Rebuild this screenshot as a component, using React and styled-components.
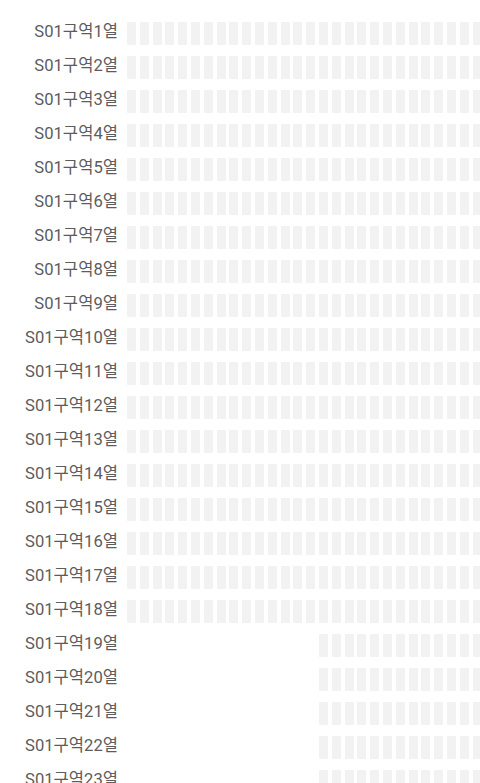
import React from 'react';
import styled, { createGlobalStyle } from 'styled-components';

const GlobalStyle = createGlobalStyle`
	html, body {
		margin: 0;
		padding: 0;
		background: #ffffff;
		overflow: hidden;
	}
	body {
		font-family: Roboto, "Noto Sans CJK KR", "Noto Sans", sans-serif;
	}
`;

const SEATS_PER_ROW = 28;

const MapContainer = styled.div`
	padding-top: 16px;
	width: 480px;
	overflow: hidden;
`;

const SeatRow = styled.div`
	display: flex;
	align-items: flex-start;
	height: 34px;
`;

const RowLabel = styled.div`
	flex: 0 0 118px;
	text-align: right;
	font-size: 16.6px;
	line-height: 31px;
	color: #5c5c5c;
	white-space: nowrap;
`;

const Seats = styled.div`
	display: flex;
	gap: 3.8px;
	margin-left: 9px;
	margin-top: 6px;
`;

const Seat = styled.div`
	flex: 0 0 9px;
	height: 23px;
	background: ${props => (props.$empty ? 'transparent' : '#f2f2f2')};
	border-radius: 1px;
`;

// rows from 19 onward only have the right-hand block of seats
const rows = Array.from({ length: 23 }, (_, i) => ({
	name: `S01구역${i + 1}열`,
	firstSeat: i < 18 ? 0 : 15,
}));

const App = () => {
	return (
		<>
			<GlobalStyle />
			<MapContainer>
				{rows.map(row => (
					<SeatRow key={row.name}>
						<RowLabel>{row.name}</RowLabel>
						<Seats>
							{Array.from({ length: SEATS_PER_ROW }, (_, s) => (
								<Seat key={s} $empty={s < row.firstSeat} />
							))}
						</Seats>
					</SeatRow>
				))}
			</MapContainer>
		</>
	);
};

export default App;
